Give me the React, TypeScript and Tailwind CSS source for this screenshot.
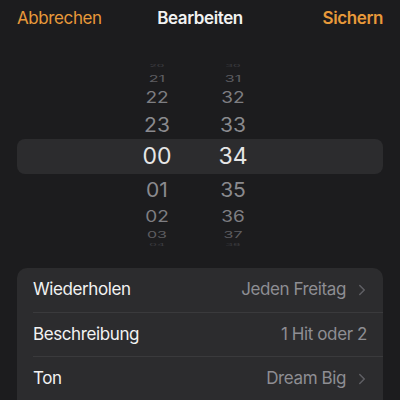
import { ChevronRight } from "lucide-react";

const font = { fontFamily: "Inter, 'Noto Sans', sans-serif" };

type Row = { h: string; a: string; b: string; cls: string };

// rows above and below the selected band, sized to fake the wheel's perspective
const above: Row[] = [
  { h: "h-[8px]", a: "20", b: "30", cls: "text-[12px] text-[#3e3e42] scale-y-[0.3]" },
  { h: "h-[16px]", a: "21", b: "31", cls: "text-[16px] text-[#5e5e62] scale-y-[0.6]" },
  { h: "h-[23px]", a: "22", b: "32", cls: "text-[19px] text-[#7e7e82] scale-y-[0.82]" },
  { h: "h-[30px]", a: "23", b: "33", cls: "text-[21px] text-[#8a8a8e] scale-y-[0.95]" },
];

const below: Row[] = [
  { h: "h-[31px]", a: "01", b: "35", cls: "text-[21px] text-[#8a8a8e] scale-y-[0.95]" },
  { h: "h-[23px]", a: "02", b: "36", cls: "text-[19px] text-[#7e7e82] scale-y-[0.8]" },
  { h: "h-[14px]", a: "03", b: "37", cls: "text-[16px] text-[#5e5e62] scale-y-[0.55]" },
  { h: "h-[5px]", a: "04", b: "38", cls: "text-[12px] text-[#3e3e42] scale-y-[0.25]" },
];

const WheelRow = ({ row }: { row: Row }) => (
  <div className={`${row.h} flex items-center pl-[120px] overflow-hidden`}>
    <span className={`w-10 text-center leading-none ${row.cls}`}>{row.a}</span>
    <span className={`w-10 ml-9 text-center leading-none ${row.cls}`}>{row.b}</span>
  </div>
);

const settings = [
  { label: "Wiederholen", value: "Jeden Freitag", chevron: true },
  { label: "Beschreibung", value: "1 Hit oder 2", chevron: false },
  { label: "Ton", value: "Dream Big", chevron: true },
];

export default function App() {
  return (
    <div className="w-[400px] h-[400px] overflow-hidden bg-[#1c1c1e]" style={font}>
      {/* HEADER */}
      <div className="h-[38px] grid grid-cols-3 items-center px-[17px] text-[17px] tracking-[-0.4px]">
        <span className="justify-self-start text-[#e8993a]">Abbrechen</span>
        <span className="justify-self-center font-semibold text-[#f2f2f2]">Bearbeiten</span>
        <span className="justify-self-end font-semibold text-[#e8993a]">Sichern</span>
      </div>

      {/* PICKER */}
      <div className="mx-[17px] mt-[24px]">
        {above.map((r) => (
          <WheelRow key={r.a} row={r} />
        ))}
        <div className="h-[35px] flex items-center pl-[120px] rounded-lg bg-[#2c2c2e]">
          <span className="w-10 text-center text-[23px] leading-none text-[#e6e6e6]">00</span>
          <span className="w-10 ml-9 text-center text-[23px] leading-none text-[#e6e6e6]">34</span>
        </div>
        {below.map((r) => (
          <WheelRow key={r.a} row={r} />
        ))}
      </div>

      {/* SETTINGS */}
      <div className="mx-[17px] mt-[21px] rounded-[10px] bg-[#2c2c2e] pb-4">
        {settings.map((s, i) => (
          <div key={s.label} className="pl-4">
            <div
              className={`h-[44px] flex items-center justify-between pr-4 text-[17px] tracking-[-0.4px] ${
                i > 0 ? "border-t border-[#3a3a3c]" : ""
              }`}
            >
              <span className="text-[#f2f2f2]">{s.label}</span>
              <span className="flex items-center text-[#8e8e93]">
                {s.value}
                {s.chevron && (
                  <ChevronRight className="ml-[7px] -mr-[4px] w-[18px] h-[18px] text-[#5f5f64]" strokeWidth={2} />
                )}
              </span>
            </div>
          </div>
        ))}
      </div>
    </div>
  );
}
